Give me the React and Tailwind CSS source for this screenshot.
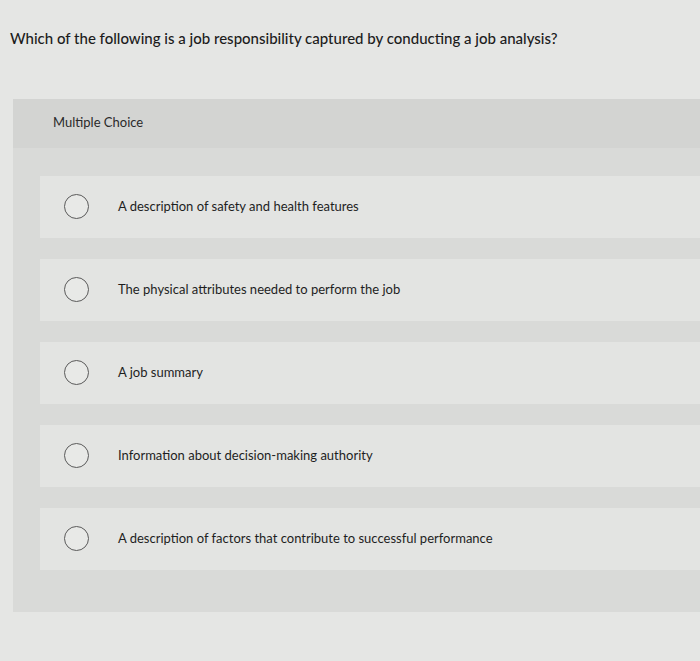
export default function App() {
  const options = [
    "A description of safety and health features",
    "The physical attributes needed to perform the job",
    "A job summary",
    "Information about decision-making authority",
    "A description of factors that contribute to successful performance",
  ];
  return (
    <div className="w-[700px] h-[661px] overflow-hidden bg-[#e5e6e4] text-[#1c1c1c]" style={{ fontFamily: 'Lato, "Open Sans", sans-serif' }}>
      <div className="pt-[27px] pl-[10px] text-[15px] font-medium tracking-[0px]">
        Which of the following is a job responsibility captured by conducting a job analysis?
      </div>
      <div className="mt-[49px] ml-[13px] bg-[#d9dad8] pb-[42px]">
        <div className="h-[49px] bg-[#d3d4d2] pl-[40px] flex items-center text-[13px] text-[#2a2a2a]">
          Multiple Choice
        </div>
        <div className="pt-[28px] pl-[27px] flex flex-col gap-[21px]">
          {options.map((o) => (
            <div key={o} className="h-[62px] bg-[#e3e4e2] flex items-center">
              <div className="ml-[24px] w-[25px] h-[25px] rounded-full border border-[#5a5a5a] bg-[#e8e9e7] shrink-0" />
              <div className="ml-[29px] text-[13px] text-[#1e1e1e]">{o}</div>
            </div>
          ))}
        </div>
      </div>
    </div>
  );
}
